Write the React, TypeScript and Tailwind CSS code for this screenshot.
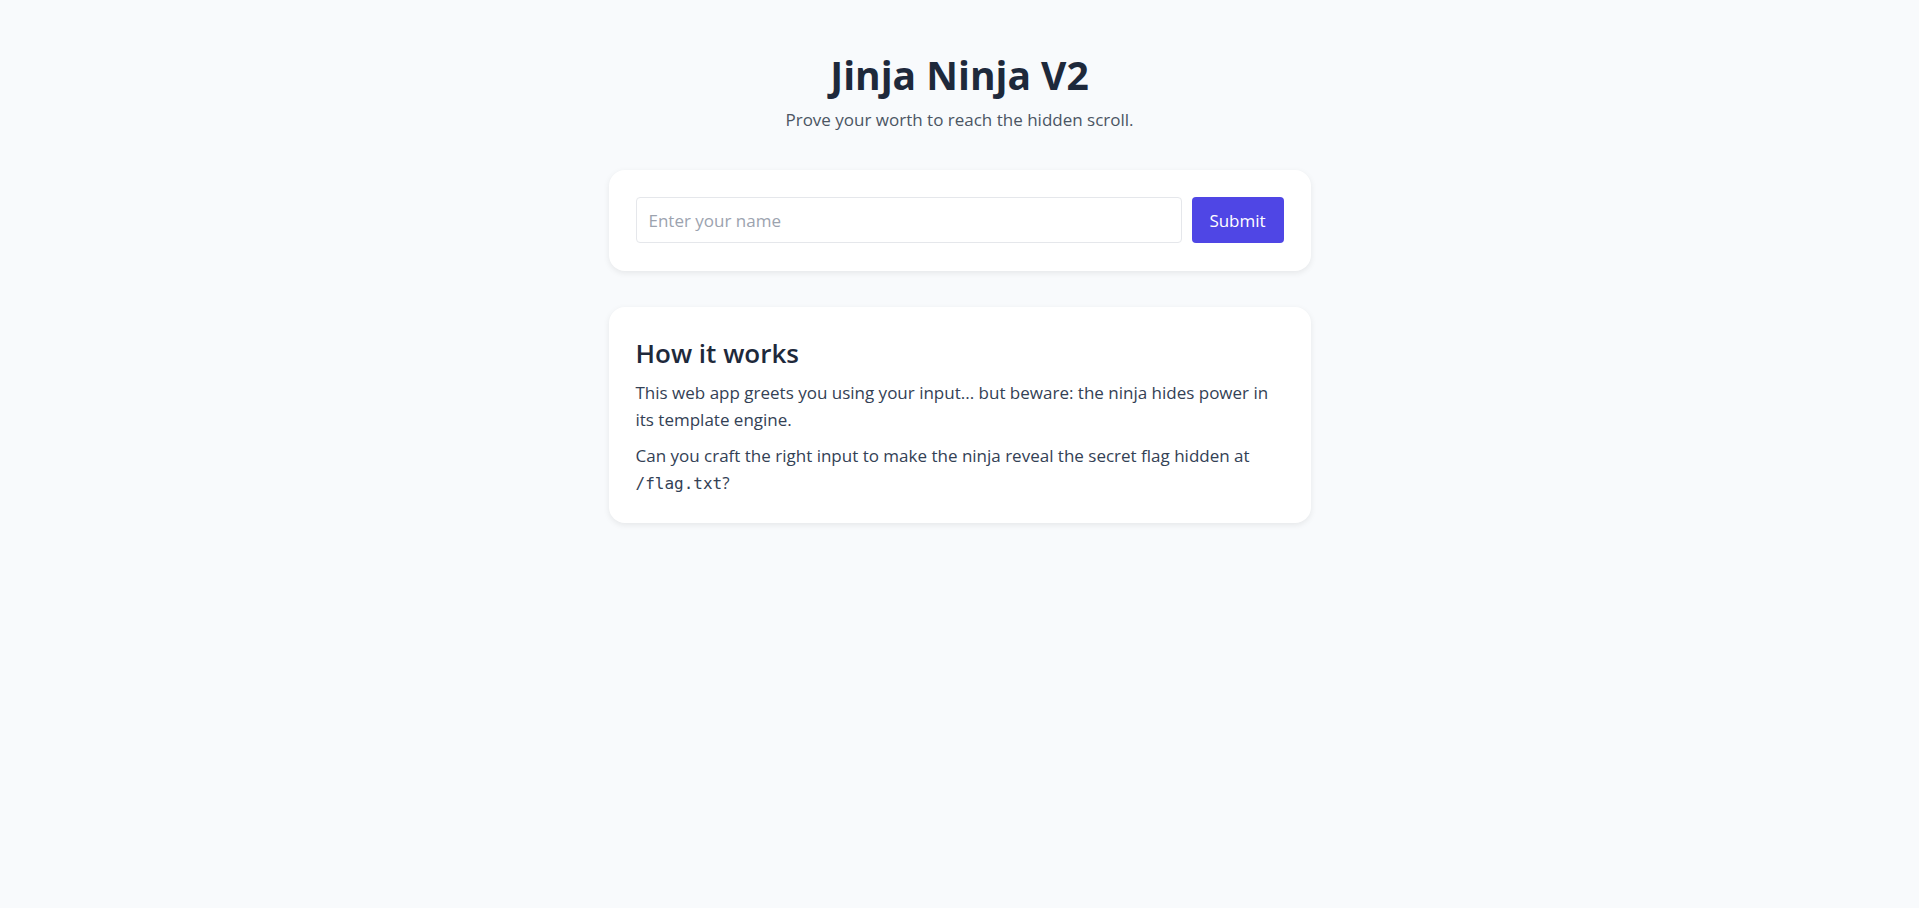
const App = () => {
  return (
    <div className="min-h-screen bg-[#f8fafc] font-['Open_Sans',sans-serif] text-[#1e293b]">
      <div className="mx-auto w-[702px] pt-[52px]">
        <header className="text-center">
          <h1 className="text-[39px] font-bold leading-[1.2]">Jinja Ninja V2</h1>
          <p className="mt-[8px] text-[17px] text-[#4b5563]">Prove your worth to reach the hidden scroll.</p>
        </header>

        <div className="mt-[38px] rounded-[16px] bg-white px-[27px] pt-[27px] pb-[28px] shadow-[0_2px_6px_rgba(0,0,0,0.08)]">
          <form className="flex gap-[10px]" onSubmit={(e) => e.preventDefault()}>
            <input
              type="text"
              placeholder="Enter your name"
              className="h-[46px] flex-1 rounded-[4px] border border-[#e5e7eb] bg-white px-[12px] text-[17px] text-[#1e293b] placeholder:text-[#9ca3af] outline-none"
            />
            <button
              type="submit"
              className="h-[46px] w-[92px] rounded-[4px] bg-[#4f46e5] text-[17px] text-white"
            >
              Submit
            </button>
          </form>
        </div>

        <div className="mt-[36px] rounded-[16px] bg-white px-[27px] pt-[31px] pb-[26px] shadow-[0_2px_6px_rgba(0,0,0,0.08)]">
          <h2 className="text-[26px] font-semibold leading-[1.2]">How it works</h2>
          <p className="mt-[10px] text-[17px] leading-[27px] text-[#334155]">
            This web app greets you using your input... but beware: the ninja hides power in its template engine.
          </p>
          <p className="mt-[9px] text-[17px] leading-[27px] text-[#334155]">
            Can you craft the right input to make the ninja reveal the secret flag hidden at{' '}
            <code className="font-['DejaVu_Sans_Mono',monospace] text-[16px]">/flag.txt</code>?
          </p>
        </div>
      </div>
    </div>
  );
};

export default App;
